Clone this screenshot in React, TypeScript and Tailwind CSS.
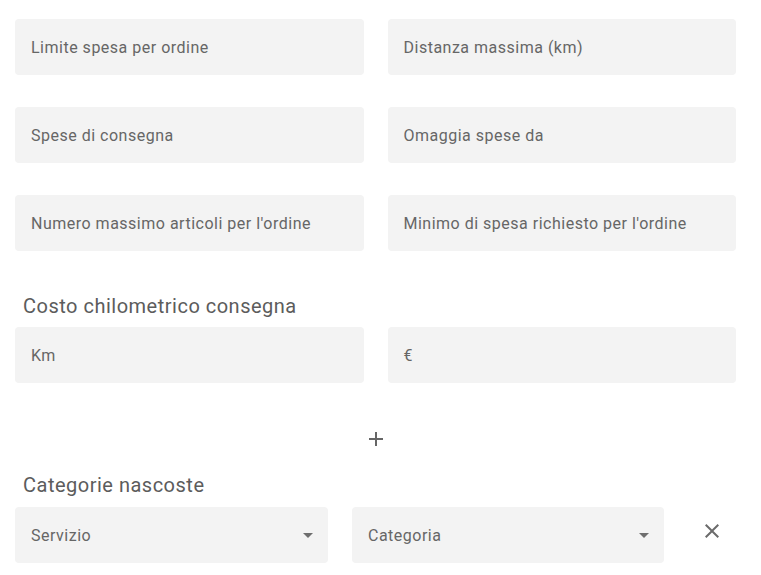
const font = { fontFamily: 'Roboto, "Liberation Sans", sans-serif' };

// Material-like filled field, label only
function Field({ label }: { label: string }) {
  return (
    <div className="h-14 rounded bg-[#f3f3f3] flex items-center pl-4 pt-[2px] text-base tracking-[0.5px] text-[#666] leading-none">
      {label}
    </div>
  );
}

function SelectField({ label }: { label: string }) {
  return (
    <div className="relative h-14 rounded bg-[#f3f3f3] flex items-center pl-4 pt-[2px] text-base tracking-[0.5px] text-[#666] leading-none">
      {label}
      <svg className="absolute right-[8px] top-1/2 -translate-y-1/2 h-6 w-6 text-[#6e6e6e]" viewBox="0 0 24 24" fill="currentColor">
        <path d="M7 10l5 5 5-5z" />
      </svg>
    </div>
  );
}

const PlusIcon = () => (
  <svg className="h-6 w-6 text-[#666]" viewBox="0 0 24 24" fill="currentColor">
    <path d="M19 13h-6v6h-2v-6H5v-2h6V5h2v6h6v2z" />
  </svg>
);

const CloseIcon = () => (
  <svg className="h-6 w-6 text-[#6b6b6b]" viewBox="0 0 24 24" fill="currentColor">
    <path d="M19 6.41 17.59 5 12 10.59 6.41 5 5 6.41 10.59 12 5 17.59 6.41 19 12 13.41 17.59 19 19 17.59 13.41 12z" />
  </svg>
);

export default function App() {
  return (
    <div className="min-h-screen bg-white" style={font}>
      <div className="ml-[15px] w-[721px] pt-[19px]">
        <div className="grid grid-cols-2 gap-x-6 gap-y-8">
          <Field label="Limite spesa per ordine" />
          <Field label="Distanza massima (km)" />
          <Field label="Spese di consegna" />
          <Field label="Omaggia spese da" />
          <Field label="Numero massimo articoli per l'ordine" />
          <Field label="Minimo di spesa richiesto per l'ordine" />
        </div>

        <h2 className="mt-[39px] mb-[5px] pl-2 h-8 leading-8 text-xl tracking-[0.5px] text-[#5c5c5c]">
          Costo chilometrico consegna
        </h2>
        <div className="grid grid-cols-2 gap-x-6">
          <Field label="Km" />
          <Field label="€" />
        </div>

        <div className="mt-8 flex justify-center">
          <button className="h-12 w-12 flex items-center justify-center rounded-full">
            <PlusIcon />
          </button>
        </div>

        <h2 className="mt-[6px] mb-[6px] pl-2 h-8 leading-8 text-xl tracking-[0.5px] text-[#5c5c5c]">
          Categorie nascoste
        </h2>
        <div className="flex items-center gap-6">
          <div className="w-[313px]">
            <SelectField label="Servizio" />
          </div>
          <div className="w-[312px]">
            <SelectField label="Categoria" />
          </div>
          <button className="h-12 w-12 -mt-[9px] flex items-center justify-center rounded-full">
            <CloseIcon />
          </button>
        </div>
      </div>
    </div>
  );
}
